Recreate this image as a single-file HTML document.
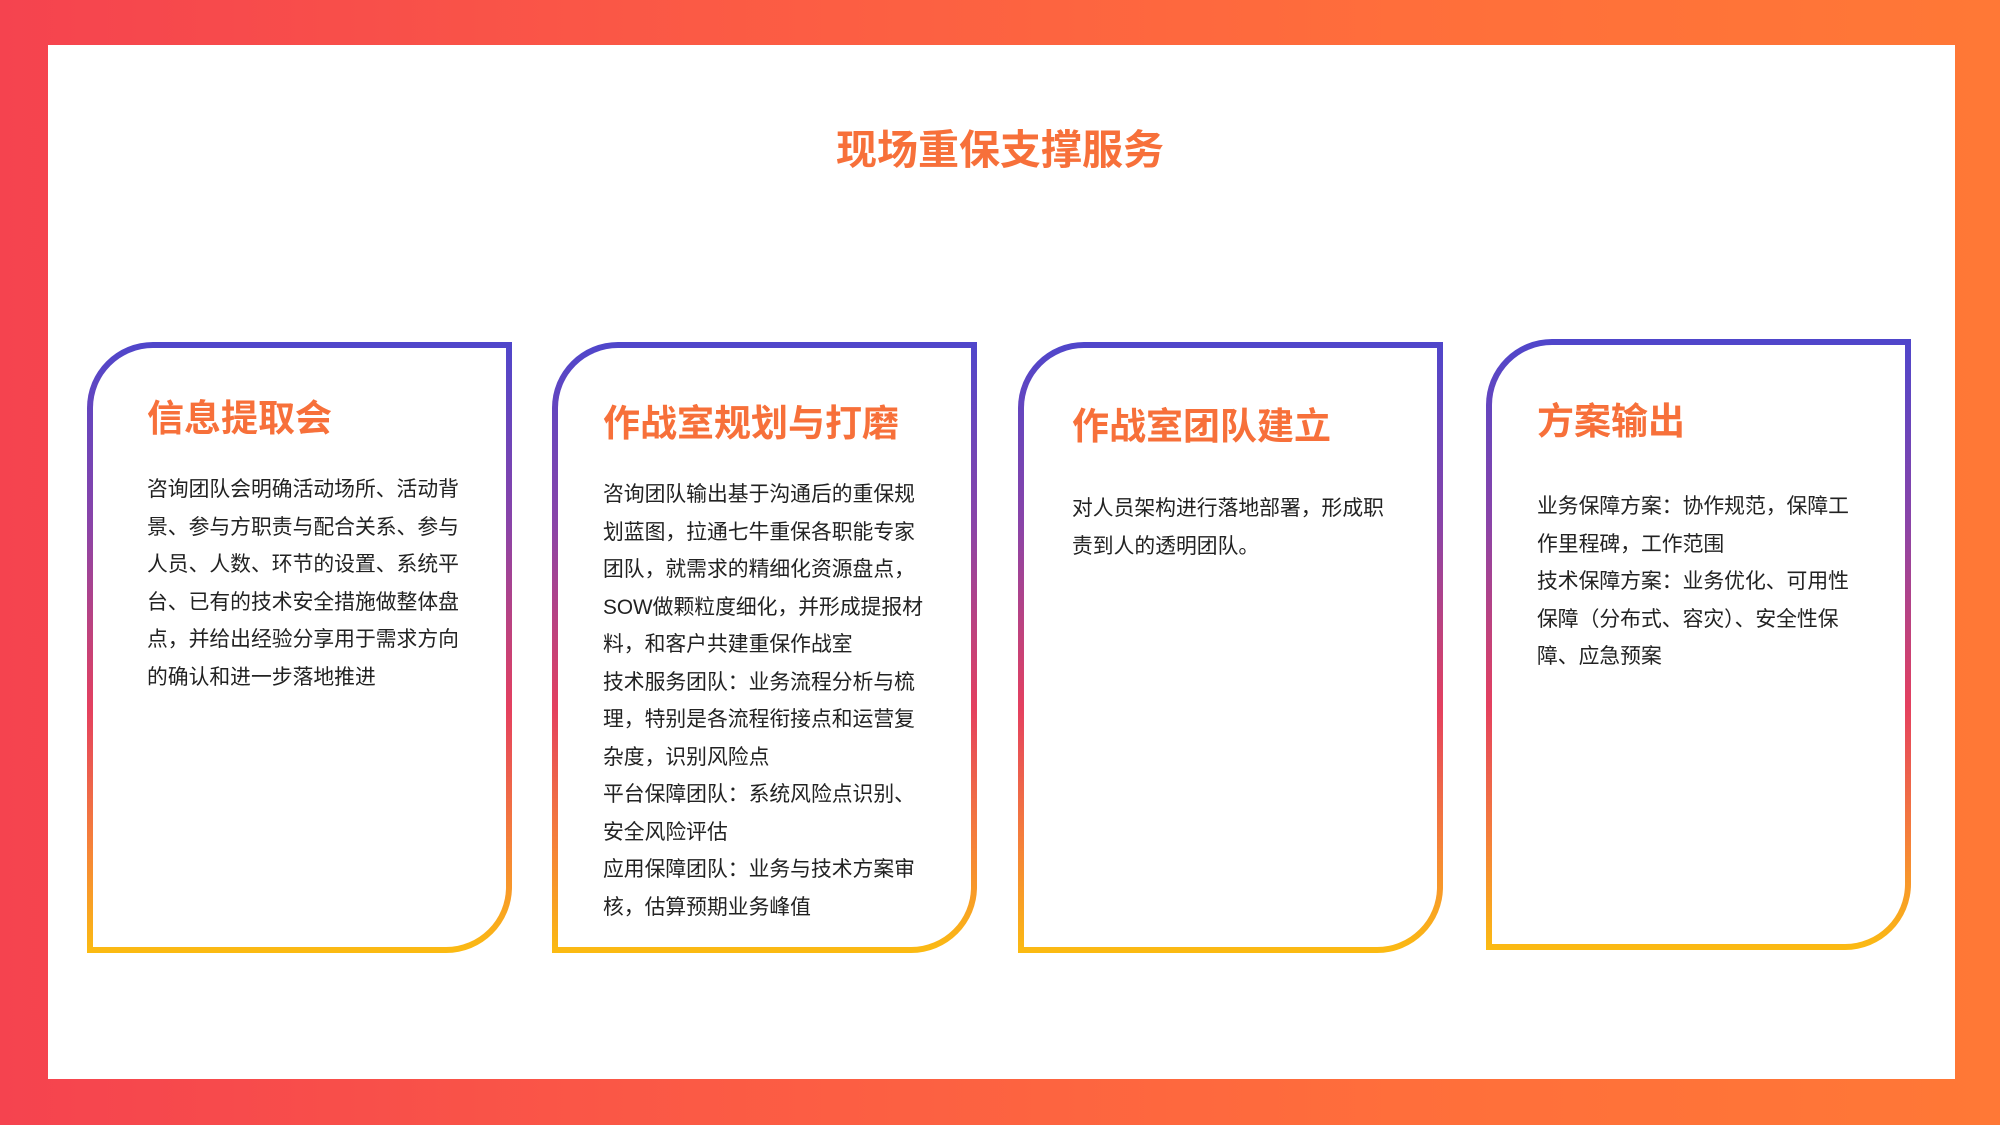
<!DOCTYPE html>
<html><head><meta charset="utf-8"><style>
*{margin:0;padding:0;box-sizing:border-box}
body{width:2000px;height:1125px;overflow:hidden;background:linear-gradient(90deg,#f5434f 0%,#fb5a45 35%,#ff6e3b 70%,#ff7836 100%);font-family:"Liberation Sans","Noto Sans CJK SC",sans-serif;position:relative}
.panel{position:absolute;left:48px;top:45px;width:1907px;height:1034px;background:#fff}
.title{position:absolute;left:0;width:2000px;top:116px;text-align:center;font-size:41px;font-weight:bold;color:#f7703a}
.card{position:absolute;width:425px;height:611px;border-radius:66px 0 66px 0;padding:6px;background:linear-gradient(180deg,#4f46cb 0%,#8a44a8 30%,#e4405f 60%,#f5803a 82%,#fbbb12 100%)}
.in{width:100%;height:100%;background:#fff;border-radius:60px 0 60px 0;position:relative}
.h{position:absolute;font-size:37px;font-weight:bold;color:#f7703a;white-space:nowrap}
.b{position:absolute;font-size:20.8px;line-height:37.5px;color:#222;white-space:nowrap}
</style></head><body>
<div class="panel"></div>
<div class="title">现场重保支撑服务</div>

<div class="card" style="left:87px;top:342px"><div class="in">
<div class="h" style="top:40px;left:54px">信息提取会</div>
<div class="b" style="top:123px;left:54px">咨询团队会明确活动场所、活动背<br>景、参与方职责与配合关系、参与<br>人员、人数、环节的设置、系统平<br>台、已有的技术安全措施做整体盘<br>点，并给出经验分享用于需求方向<br>的确认和进一步落地推进</div>
</div></div>

<div class="card" style="left:552px;top:342px"><div class="in">
<div class="h" style="top:45px;left:45px">作战室规划与打磨</div>
<div class="b" style="top:128px;left:45px">咨询团队输出基于沟通后的重保规<br>划蓝图，拉通七牛重保各职能专家<br>团队，就需求的精细化资源盘点，<br>SOW做颗粒度细化，并形成提报材<br>料，和客户共建重保作战室<br>技术服务团队：业务流程分析与梳<br>理，特别是各流程衔接点和运营复<br>杂度，识别风险点<br>平台保障团队：系统风险点识别、<br>安全风险评估<br>应用保障团队：业务与技术方案审<br>核，估算预期业务峰值</div>
</div></div>

<div class="card" style="left:1018px;top:342px"><div class="in">
<div class="h" style="top:48px;left:48px">作战室团队建立</div>
<div class="b" style="top:142px;left:48px">对人员架构进行落地部署，形成职<br>责到人的透明团队。</div>
</div></div>

<div class="card" style="left:1486px;top:339px"><div class="in">
<div class="h" style="top:46px;left:45px">方案输出</div>
<div class="b" style="top:143px;left:45px">业务保障方案：协作规范，保障工<br>作里程碑，工作范围<br>技术保障方案：业务优化、可用性<br>保障（分布式、容灾）、安全性保<br>障、应急预案</div>
</div></div>
</body></html>
